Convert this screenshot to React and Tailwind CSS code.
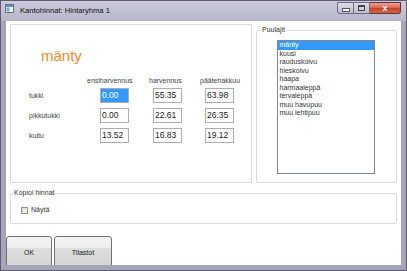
export default function App() {
  const rows = [
    ["tukki", "0.00", "55.35", "63.98"],
    ["pikkutukki", "0.00", "22.61", "26.35"],
    ["kuitu", "13.52", "16.83", "19.12"],
  ];
  const species = [
    "mänty",
    "kuusi",
    "rauduskoivu",
    "hieskoivu",
    "haapa",
    "harmaaleppä",
    "tervaleppä",
    "muu havupuu",
    "muu lehtipuu",
  ];

  const Cell = ({ value, selected, first }) => (
    <div
      className={`w-[29px] h-[15px] border border-[#abadb3] bg-white shrink-0 ${
        first ? "" : ""
      }`}
    >
      <div
        className={`w-full h-full pl-[1px] text-[8.5px] leading-[13px] ${
          selected ? "bg-[#3399ff] text-white" : "text-[#222]"
        }`}
      >
        {value}
      </div>
    </div>
  );

  return (
    <div className="w-[407px] h-[271px] flex flex-col overflow-hidden border border-[#5e5c70] bg-[#a6a4ba] font-['Liberation_Sans',Arial,sans-serif]">
      {/* Title bar */}
      <div className="h-[20px] shrink-0 flex items-start bg-[linear-gradient(to_bottom,#cbc9da,#b7b5c9)]">
        <svg width="9" height="9" viewBox="0 0 9 9" className="ml-[4px] mt-[3px] shrink-0">
          <rect x="0.5" y="0.5" width="8" height="8" fill="#f4f6f8" stroke="#6b6f7a" />
          <rect x="1" y="1" width="7" height="2" fill="#5b8fc0" />
          <rect x="1.5" y="3.5" width="3" height="4" fill="#7aa7cf" />
        </svg>
        <div className="ml-[6px] mt-[5px] text-[7.6px] leading-[9px] text-[#111]">
          Kantohinnat: Hintaryhma 1
        </div>
        <div className="ml-auto mr-[5px] mt-[1px] flex">
          <div className="w-[17px] h-[12px] border border-[#6d6b80] rounded-bl-[3px] bg-[linear-gradient(to_bottom,#dcdbe6,#bfbdd0)] flex items-end justify-center pb-[2px]">
            <div className="w-[6px] h-[2px] bg-white border border-[#555] box-content -mb-[1px]" />
          </div>
          <div className="w-[16px] h-[12px] border border-l-0 border-[#6d6b80] bg-[linear-gradient(to_bottom,#dcdbe6,#bfbdd0)] flex items-center justify-center">
            <div className="w-[7px] h-[6px] border-[1.5px] border-[#444] border-t-2 bg-transparent" />
          </div>
          <div className="w-[31px] h-[12px] border border-l-0 border-[#5b3636] rounded-br-[3px] bg-[linear-gradient(to_bottom,#eba291_0%,#d96a52_45%,#c6432c_55%,#d4664a_100%)] flex items-center justify-center">
            <span className="text-white text-[9px] leading-[9px] font-bold">x</span>
          </div>
        </div>
      </div>

      {/* Content */}
      <div className="flex-1 mx-[5px] mb-[5px] bg-white flex flex-col overflow-hidden text-[#333]">
        {/* Top row */}
        <div className="shrink-0 mx-[4px] mt-[3px] h-[159px] flex gap-[4px]">
          {/* Left panel */}
          <div className="w-[242px] border border-[#dadada] flex flex-col">
            <div className="ml-[30px] mt-[22px] text-[15px] leading-[17px] text-[#f0892a]">
              mänty
            </div>
            <div className="mt-[13px] pl-[76px] flex text-[7px] leading-[8px] text-[#444]">
              <span className="w-[62px] shrink-0">ensiharvennus</span>
              <span className="w-[51px] shrink-0">harvennus</span>
              <span>päätehakkuu</span>
            </div>
            <div className="mt-[3px] flex flex-col gap-[5px]">
              {rows.map((r, i) => (
                <div key={r[0]} className="h-[15px] pl-[18px] flex items-center">
                  <span className="w-[71px] shrink-0 text-[7px] leading-[8px] text-[#444]">
                    {r[0]}
                  </span>
                  <Cell value={r[1]} selected={i === 0} />
                  <div className="ml-[24px]">
                    <Cell value={r[2]} />
                  </div>
                  <div className="ml-[23px]">
                    <Cell value={r[3]} />
                  </div>
                </div>
              ))}
            </div>
          </div>

          {/* Puulajit */}
          <fieldset className="flex-1 mt-[2px] border border-[#dadada] rounded-[2px]">
            <legend className="ml-[4px] px-[1px] text-[7px] leading-[8px] text-[#333]">
              Puulajit
            </legend>
            <div className="ml-[20px] mt-[6px] w-[98px] h-[134px] border border-[#828790] bg-white">
              {species.map((s, i) => (
                <div
                  key={s}
                  className={`h-[8.5px] pl-[1.5px] text-[7px] leading-[8.5px] ${
                    i === 0 ? "bg-[#3399ff] text-white" : "text-[#333]"
                  }`}
                >
                  {s}
                </div>
              ))}
            </div>
          </fieldset>
        </div>

        {/* Kopioi hinnat */}
        <fieldset className="shrink-0 mx-[4px] mt-[6px] border border-[#dadada] rounded-[2px] pb-[9px]">
          <legend className="ml-[3px] px-[0px] text-[7px] leading-[8px] text-[#333]">
            Kopioi hinnat
          </legend>
          <div className="mt-[9px] ml-[10px] h-[8px] flex items-center">
            <div className="w-[7px] h-[7px] border border-[#8e8f8f] bg-[linear-gradient(135deg,#dcdcdc,#f6f6f6)]" />
            <span className="ml-[3px] text-[7px] leading-[8px] text-[#333]">Näytä</span>
          </div>
        </fieldset>

        {/* Buttons */}
        <div className="shrink-0 mt-[12px] flex gap-[2px]">
          <button className="w-[46px] h-[34px] shrink-0 border border-[#707070] rounded-[3px] bg-[linear-gradient(to_bottom,#f4f4f4_0%,#ededed_35%,#dedede_36%,#d2d2d2_100%)] text-[7px] text-[#222] flex items-center justify-center">
            OK
          </button>
          <button className="w-[58px] h-[34px] shrink-0 border border-[#707070] rounded-[3px] bg-[linear-gradient(to_bottom,#f4f4f4_0%,#ededed_35%,#dedede_36%,#d2d2d2_100%)] text-[7px] text-[#222] flex items-center justify-center">
            Tilastot
          </button>
        </div>
      </div>
    </div>
  );
}
